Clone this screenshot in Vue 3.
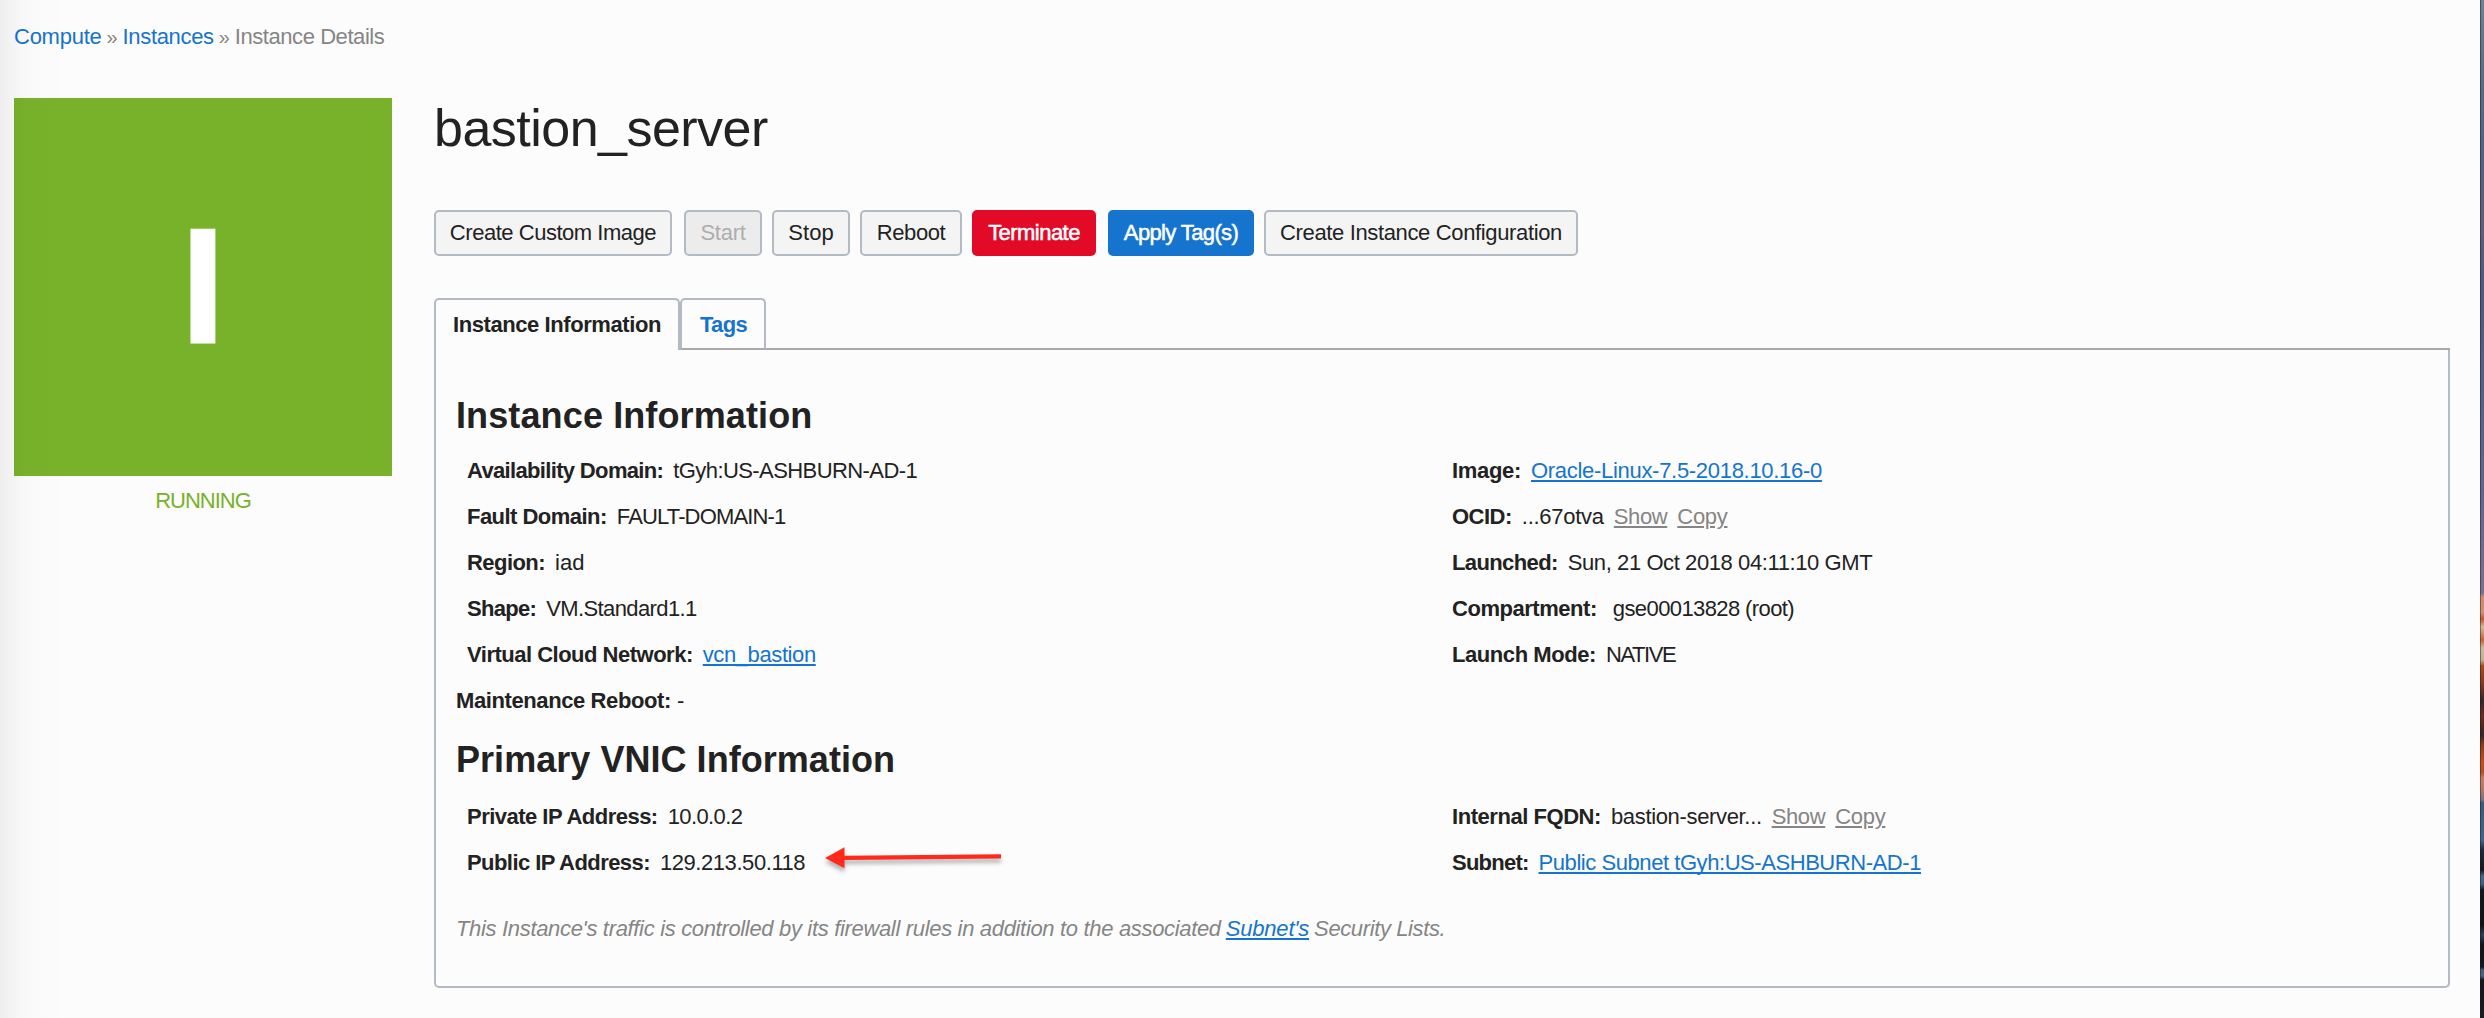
<script setup>
const tracking = (px) => ({ letterSpacing: px + 'px' })

const actions = [
  { text: 'Create Custom Image', kind: 'plain', width: 238, gap: 12, ls: -0.47 },
  { text: 'Start', kind: 'disabled', width: 78, gap: 10, ls: -0.25 },
  { text: 'Stop', kind: 'plain', width: 78, gap: 10, ls: 0.1 },
  { text: 'Reboot', kind: 'plain', width: 102, gap: 10, ls: -0.42 },
  { text: 'Terminate', kind: 'danger', width: 124, gap: 12, ls: -0.54 },
  { text: 'Apply Tag(s)', kind: 'primary', width: 146, gap: 10, ls: -0.63 },
  { text: 'Create Instance Configuration', kind: 'plain', width: 314, gap: 0, ls: -0.36 },
]

const instanceLeft = [
  { label: 'Availability Domain:', lls: -0.66, value: 'tGyh:US-ASHBURN-AD-1', ls: -0.58 },
  { label: 'Fault Domain:', lls: -0.53, value: 'FAULT-DOMAIN-1', ls: -0.85 },
  { label: 'Region:', lls: -0.55, value: 'iad', ls: 0.1 },
  { label: 'Shape:', lls: -0.7, value: 'VM.Standard1.1', ls: -0.6 },
  { label: 'Virtual Cloud Network:', lls: -0.5, value: 'vcn_bastion', ls: -0.4, link: true },
]

const instanceRight = [
  { label: 'Image:', lls: -0.32, value: 'Oracle-Linux-7.5-2018.10.16-0', ls: -0.3, link: true },
  { label: 'OCID:', lls: -0.5, value: '...67otva', ls: -0.27, tools: true },
  { label: 'Launched:', lls: -0.61, value: 'Sun, 21 Oct 2018 04:11:10 GMT', ls: -0.41 },
  { label: 'Compartment:', lls: -0.46, value: 'gse00013828 (root)', ls: -0.6, wide: true },
  { label: 'Launch Mode:', lls: -0.43, value: 'NATIVE', ls: -1.43 },
]

const vnicLeft = [
  { label: 'Private IP Address:', lls: -0.52, value: '10.0.0.2', ls: -0.61 },
  { label: 'Public IP Address:', lls: -0.57, value: '129.213.50.118', ls: -0.43, arrow: true },
]

const vnicRight = [
  { label: 'Internal FQDN:', lls: -0.45, value: 'bastion-server...', ls: -0.34, tools: true },
  { label: 'Subnet:', lls: -0.76, value: 'Public Subnet tGyh:US-ASHBURN-AD-1', ls: -0.44, link: true },
]

const groups = [
  { title: 'Instance Information', ls: 0.12, columns: [instanceLeft, instanceRight], reboot: true },
  { title: 'Primary VNIC Information', ls: 0.04, columns: [vnicLeft, vnicRight] },
]
</script>

<template>
  <div class="page">
    <nav class="crumbs">
      <a class="crumb-link" :style="tracking(-0.25)">Compute</a>
      <span class="sep">»</span>
      <a class="crumb-link" :style="tracking(-0.33)">Instances</a>
      <span class="sep">»</span>
      <span :style="tracking(-0.43)">Instance Details</span>
    </nav>

    <div class="body">
      <aside class="side">
        <div class="tile"><span>I</span></div>
        <div class="state">RUNNING</div>
      </aside>

      <main class="main">
        <h1>bastion_server</h1>

        <div class="actions">
          <button
            v-for="a in actions"
            :key="a.text"
            :class="['btn', a.kind]"
            :style="{ width: a.width + 'px', marginRight: a.gap + 'px', letterSpacing: a.ls + 'px' }"
          >{{ a.text }}</button>
        </div>

        <div class="tabs">
          <div class="tab active">Instance Information</div>
          <div class="tab other">Tags</div>
          <div class="rule"></div>
        </div>

        <section class="panel">
          <div v-for="g in groups" :key="g.title" class="group">
            <h2 :style="tracking(g.ls)">{{ g.title }}</h2>
            <div class="columns">
              <div v-for="(col, i) in g.columns" :key="i" class="column">
                <div v-for="r in col" :key="r.label" class="row">
                  <strong :style="tracking(r.lls)">{{ r.label }}</strong>
                  <span
                    :class="['value', { link: r.link, wide: r.wide }]"
                    :style="tracking(r.ls)"
                  >{{ r.value }}</span>
                  <template v-if="r.tools">
                    <a class="tool show">Show</a>
                    <a class="tool copy">Copy</a>
                  </template>
                  <svg v-if="r.arrow" class="arrow" width="186" height="32" viewBox="0 0 186 32">
                    <path d="M2 15 L21.5 4.3 V12.8 L178 11.2 V15.6 L21.5 17 V25.2 Z" fill="#ff2a1c" />
                  </svg>
                </div>
              </div>
            </div>
            <div v-if="g.reboot" class="row reboot">
              <strong>Maintenance Reboot:</strong><span>-</span>
            </div>
          </div>
          <p class="note">
            <span :style="tracking(-0.33)">This Instance's traffic is controlled by its firewall rules in addition to the associated</span>
            <a class="link" :style="tracking(-0.2)">Subnet's</a>
            <span :style="tracking(-0.38)">Security Lists.</span>
          </p>
        </section>
      </main>
    </div>

    <div class="left-shade"></div>
    <div class="desktop-edge"></div>
  </div>
</template>

<style>
body {
  background: #fcfcfc;
}
</style>

<style scoped>
.page {
  position: relative;
  box-sizing: border-box;
  width: 2484px;
  height: 1018px;
  overflow: hidden;
  padding: 23px 34px 0 14px;
  background: #fcfcfc;
  color: #222;
  font: 22px/28px "Liberation Sans", Arial, sans-serif;
  white-space: nowrap;
}
.crumbs {
  display: flex;
  height: 28px;
  color: #858585;
}
.crumb-link {
  color: #1574cd;
}
.sep {
  width: 21px;
  text-align: center;
  font-size: 20px;
}
.body {
  display: flex;
  gap: 42px;
  padding-top: 47px;
}
.side {
  width: 378px;
}
.tile {
  display: flex;
  align-items: center;
  justify-content: center;
  height: 378px;
  background: #78b22a;
  color: #fff;
  font-weight: 700;
  font-size: 165px;
}
.tile span {
  line-height: 186px;
  padding-bottom: 2px;
  -webkit-text-stroke: 1px #fff;
}
.state {
  padding-top: 11px;
  text-align: center;
  color: #78b22a;
  letter-spacing: -1.02px;
}
.main {
  width: 2016px;
}
h1 {
  margin: 0;
  height: 112px;
  font-size: 52px;
  line-height: 61px;
  font-weight: 400;
  letter-spacing: -0.52px;
}
.actions {
  display: flex;
  height: 46px;
}
.btn {
  box-sizing: border-box;
  height: 46px;
  padding: 0;
  border: 2px solid #b3bac4;
  border-radius: 5px;
  background: #f4f4f4;
  color: #222;
  font: inherit;
  line-height: 42px;
}
.disabled {
  background: #ececec;
  color: #adadad;
}
.danger {
  background: #e20a26;
  border-color: #e20a26;
  color: #fff;
  -webkit-text-stroke: 0.5px #fff;
}
.primary {
  background: #1574cd;
  border-color: #1574cd;
  color: #fff;
  -webkit-text-stroke: 0.5px #fff;
}
.tabs {
  display: flex;
  height: 52px;
  margin-top: 42px;
  font-weight: 700;
  line-height: 49px;
}
.tab {
  box-sizing: border-box;
  height: 52px;
  border: 2px solid #b3bac4;
  border-bottom: 0;
  border-radius: 5px 5px 0 0;
}
.active {
  width: 246px;
  padding-left: 17px;
  letter-spacing: -0.42px;
}
.other {
  width: 86px;
  padding-left: 18px;
  border-bottom: 2px solid #a9a9a9;
  border-bottom-left-radius: 0;
  color: #1574cd;
  letter-spacing: -0.7px;
}
.rule {
  flex: 1;
  border-bottom: 2px solid #a9a9a9;
}
.panel {
  box-sizing: border-box;
  height: 638px;
  padding: 44px 20px 0 20px;
  border: 2px solid #b3bac4;
  border-top: 0;
  border-radius: 0 0 5px 5px;
}
h2 {
  margin: 0;
  height: 54px;
  font-size: 36px;
  line-height: 44px;
  font-weight: 700;
}
.group + .group h2 {
  height: 56px;
}
.group + .group {
  margin-top: 14px;
}
.columns {
  display: flex;
  padding-left: 11px;
}
.column {
  flex: none;
  width: 985px;
}
.row {
  display: flex;
  height: 46px;
  line-height: 46px;
}
.value {
  margin-left: 10px;
}
.wide {
  margin-left: 16px;
}
.link {
  color: #1574cd;
  text-decoration: underline;
  text-decoration-thickness: 2px;
  text-underline-offset: 2px;
  text-decoration-skip-ink: none;
}
.tool {
  color: #858585;
  text-decoration: underline;
  text-decoration-thickness: 2px;
  text-underline-offset: 2px;
  text-decoration-skip-ink: auto;
}
.show {
  margin-left: 10px;
  letter-spacing: -0.38px;
}
.copy {
  margin-left: 10px;
  letter-spacing: -0.3px;
}
.arrow {
  margin: 3px 0 0 18px;
  overflow: visible;
  filter: drop-shadow(0 4px 2px rgba(0, 0, 0, 0.3));
}
.reboot strong {
  letter-spacing: -0.4px;
}
.reboot span {
  margin-left: 6px;
}
.note {
  display: flex;
  gap: 5px;
  margin: 29px 0 0;
  font-style: italic;
  color: #858585;
}
.left-shade {
  position: absolute;
  top: 0;
  left: 0;
  width: 66px;
  height: 1018px;
  background: linear-gradient(90deg, rgba(0, 0, 0, 0.055), rgba(0, 0, 0, 0.015) 35%, rgba(0, 0, 0, 0));
}
.desktop-edge {
  position: absolute;
  top: 0;
  right: 0;
  box-sizing: border-box;
  width: 4px;
  height: 1018px;
  border-left: 1px solid rgba(20, 25, 40, 0.45);
  background: linear-gradient(
    180deg,
    #71818f 0, #5c6b80 80px, #56627f 160px, #635f78 220px, #53597a 280px,
    #596186 400px, #66658a 500px, #7b7189 593px, #cf8a6c 597px, #d09070 612px,
    #c4582e 619px, #d8b890 627px, #c4643a 640px, #cdb898 648px, #c8b090 660px,
    #a8481e 666px, #8a3a20 682px, #3a2428 700px, #6a2c1c 716px, #3a2426 735px,
    #8a3a1c 745px, #c4501c 762px, #b05028 772px, #c87a60 778px, #b07868 790px,
    #7a7080 800px, #3d5878 803px, #48648a 840px, #20283a 850px,
    #15181f 870px, #4c6480 876px, #46607c 884px, #12161e 890px, #101218 925px, #303e50 935px,
    #10131a 945px, #14171f 967px, #4c6078 970px, #4c6078 976px, #15151c 980px, #1c1a22 1018px
  );
}
</style>
